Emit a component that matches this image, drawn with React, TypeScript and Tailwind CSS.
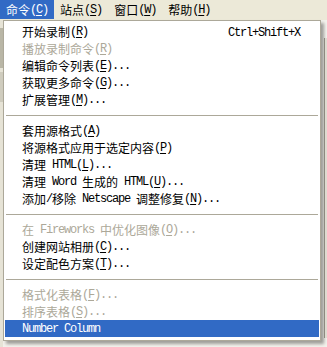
import clsx from "clsx";

type Item = { label: string; shortcut?: string; disabled?: boolean; active?: boolean } | "sep";

const menus = ["命令(&C)", "站点(&S)", "窗口(&W)", "帮助(&H)"];

const items: Item[] = [
  { label: "开始录制(&R)", shortcut: "Ctrl+Shift+X" },
  { label: "播放录制命令(&R)", disabled: true },
  { label: "编辑命令列表(&E)..." },
  { label: "获取更多命令(&G)..." },
  { label: "扩展管理(&M)..." },
  "sep",
  { label: "套用源格式(&A)" },
  { label: "将源格式应用于选定内容(&P)" },
  { label: "清理 HTML(&L)..." },
  { label: "清理 Word 生成的 HTML(&U)..." },
  { label: "添加/移除 Netscape 调整修复(&N)..." },
  "sep",
  { label: "在 Fireworks 中优化图像(&O)...", disabled: true },
  { label: "创建网站相册(&C)..." },
  { label: "设定配色方案(&T)..." },
  "sep",
  { label: "格式化表格(&F)...", disabled: true },
  { label: "排序表格(&S)...", disabled: true },
  { label: "Number Column", active: true },
];

// splits text into latin / cjk runs, "&X" marks the underlined access key
function Label({ text }: { text: string }) {
  const parts: { s: string; ascii: boolean; u: boolean }[] = [];
  for (let i = 0; i < text.length; i++) {
    let c = text[i];
    let u = false;
    if (c === "&") {
      i++;
      c = text[i];
      u = true;
    }
    const ascii = c.charCodeAt(0) < 128;
    const last = parts[parts.length - 1];
    if (last && !u && !last.u && last.ascii === ascii) last.s += c;
    else parts.push({ s: c, ascii, u });
  }
  return (
    <>
      {parts.map((p, i) => (
        <span
          key={i}
          className={clsx(
            p.ascii && "font-['Liberation_Mono',monospace] text-[12px] tracking-[-1.2px]",
            p.u && "underline underline-offset-2"
          )}
        >
          {p.s}
        </span>
      ))}
    </>
  );
}

export default function App() {
  return (
    <div className="w-[327px] h-[347px] overflow-hidden bg-[#f3f2ec] text-[12px] text-black font-['Noto_Sans_CJK_SC',sans-serif] select-none">
      <div className="flex h-[20px] bg-[#ece9d8]">
        {menus.map((m, i) => (
          <div
            key={m}
            className={clsx(
              "flex items-center h-[19px] px-[6px] whitespace-pre",
              i === 0 && "bg-[#316ac5] text-white"
            )}
          >
            <Label text={m} />
          </div>
        ))}
      </div>

      <div className="flex">
        <div className="w-[3px] h-[327px] flex flex-col bg-[#e6e3d6]">
          <div className="h-[8px]" />
          <div className="h-[40px] bg-[#b9b6a6]" />
          <div className="h-[4px]" />
          <div className="h-[30px] bg-[#cfccbe]" />
        </div>

        <div className="w-[318px] h-[321px] border border-[#aca899] bg-white py-[2px] px-px shadow-[3px_3px_3px_rgba(0,0,0,0.35)]">
          {items.map((it, i) =>
            it === "sep" ? (
              <div key={i} className="h-[14px] pt-[7px] px-px">
                <div className="h-px bg-[#aca899]" />
              </div>
            ) : (
              <div
                key={i}
                className={clsx(
                  "flex items-center h-[17px] pl-[17px] pr-[19px] whitespace-pre",
                  it.disabled && "text-[#aca899]",
                  it.active && "bg-[#316ac5] text-white"
                )}
              >
                <Label text={it.label} />
                {it.shortcut && (
                  <span className="ml-auto">
                    <Label text={it.shortcut} />
                  </span>
                )}
              </div>
            )
          )}
        </div>

        <div className="flex-1 flex pl-[3px]">
          <div className="w-[1px] mt-[18px] h-[300px] bg-[#8c8a80]" />
          <div className="flex-1 mt-[18px] h-[300px] bg-[#dedbd0]" />
        </div>
      </div>
    </div>
  );
}
